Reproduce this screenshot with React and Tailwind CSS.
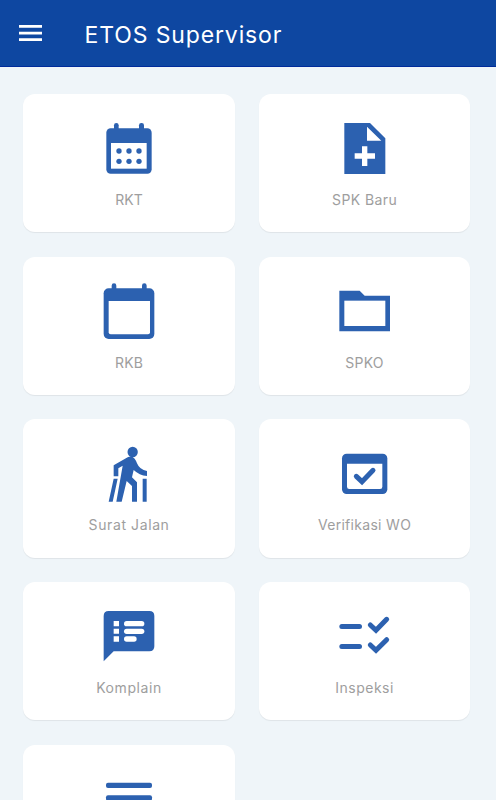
import React from 'react';

function Icon({ dx = -19, dy = -9.3, children }) {
  return (
    <svg className="h-[60px] w-[60px] shrink-0" viewBox="0 0 60 60" fill="#2c61b0">
      <g transform={`translate(${dx} ${dy}) scale(0.33333)`}>{children}</g>
    </svg>
  );
}

const items = [
  {
    label: 'RKT',
    tracking: 'tracking-[0px]',
    icon: (
      <Icon dy={-9}>
        <rect x="102" y="39" width="14" height="30" rx="7" />
        <rect x="177" y="39" width="15" height="30" rx="7" />
        <rect x="79" y="55" width="136" height="136" rx="13" />
        <rect x="93" y="99" width="107" height="77" fill="#fff" />
        {[117, 147, 177].map((x) => (
          <React.Fragment key={x}>
            <circle cx={x} cy="123" r="8" />
            <circle cx={x} cy="154" r="8" />
          </React.Fragment>
        ))}
      </Icon>
    ),
  },
  {
    label: 'SPK Baru',
    tracking: 'tracking-[0.4px]',
    icon: (
      <Icon dx={-20} dy={-9}>
        <path d="M88 39H165L211 85V192H88Z" />
        <path d="M156 50V92H199ZM141 109H157V130H180V146H157V168H141V146H119V130H141Z" fill="#fff" />
      </Icon>
    ),
  },
  {
    label: 'RKB',
    tracking: 'tracking-[0.2px]',
    icon: (
      <Icon dy={-9.7}>
        <rect x="95" y="33" width="14" height="30" rx="7" />
        <rect x="186" y="33" width="14" height="30" rx="7" />
        <rect x="71" y="48" width="152" height="152" rx="15" />
        <path d="M86 86H210V180Q210 186 204 186H92Q86 186 86 180Z" fill="#fff" />
      </Icon>
    ),
  },
  {
    label: 'SPKO',
    tracking: 'tracking-[0.2px]',
    icon: (
      <Icon dx={-20} dy={-10}>
        <path d="M73 56H134L149 71H225V178H73Z" />
        <rect x="88" y="86" width="123" height="76" fill="#fff" />
      </Icon>
    ),
  },
  {
    label: 'Surat Jalan',
    tracking: 'tracking-[0.6px]',
    icon: (
      <Icon dy={-9}>
        <circle cx="158" cy="51" r="15.5" />
        <path d="M101 124V91L143 67Q155 61 164 71Q168 76 171 85Q179 105 201 108V123Q178 121 161 105L156 127L171 142V200H156V153L140 138L125 200H109L128 92L115 100V124Z" />
        <path d="M101 131H113L98 200H86ZM188 131H200V200H188Z" />
      </Icon>
    ),
  },
  {
    label: 'Verifikasi WO',
    tracking: 'tracking-[0.3px]',
    icon: (
      <Icon dx={-25} dy={-9}>
        <rect x="96" y="56" width="136" height="121" rx="14" />
        <path d="M111 86H217V155Q217 162 210 162H118Q111 162 111 155Z" fill="#fff" />
        <path d="M139 124L156 140L189 106" fill="none" stroke="#2c61b0" strokeWidth="15" strokeLinecap="round" />
      </Icon>
    ),
  },
  {
    label: 'Komplain',
    tracking: 'tracking-[0.6px]',
    icon: (
      <Icon dy={-10}>
        <path d="M86 42H208Q223 42 223 57V148Q223 163 208 163H101L71 193V57Q71 42 86 42Z" />
        <path d="M101 72H117V88H101ZM101 95H117V110H101ZM101 118H117V134H101Z" fill="#fff" />
        <g fill="#fff">
          <rect x="132" y="72" width="61" height="16" rx="8" />
          <rect x="132" y="95" width="61" height="16" rx="8" />
          <rect x="132" y="118" width="38" height="16" rx="8" />
        </g>
      </Icon>
    ),
  },
  {
    label: 'Inspeksi',
    tracking: 'tracking-[0.5px]',
    icon: (
      <Icon dx={-20} dy={-10}>
        <rect x="73" y="81" width="68" height="15" rx="7.5" />
        <rect x="73" y="141" width="68" height="15" rx="7.5" />
        <path d="M166 84L183 100L215 67M166 144L183 160L215 128" fill="none" stroke="#2c61b0" strokeWidth="15" strokeLinecap="round" />
      </Icon>
    ),
  },
  {
    label: '',
    tracking: '',
    icon: (
      <Icon dx={0} dy={0}>
        <rect x="21" y="41" width="138" height="16" rx="6" />
        <rect x="21" y="79" width="138" height="16" rx="6" />
        <rect x="21" y="117" width="138" height="16" rx="6" />
      </Icon>
    ),
  },
];

export default function App() {
  return (
    <div className="flex h-screen w-full flex-col overflow-hidden bg-[#eff5f9] font-[Inter,Roboto,sans-serif]">
      <header className="flex h-[67px] shrink-0 items-center border-b border-[#002b9b] bg-[#0e47a1] pl-[19px] text-white">
        <svg className="h-4 w-[23px] shrink-0" viewBox="0 0 23 16" fill="#fff">
          <path d="M0 0H23V2.7H0ZM0 6.7H23V9.4H0ZM0 13.3H23V16H0Z" />
        </svg>
        <h1 className="ml-[42.5px] pt-[3px] text-[23px] leading-8 tracking-[0.87px] whitespace-nowrap">ETOS Supervisor</h1>
      </header>
      <main className="grid shrink-0 auto-rows-[138.2px] grid-cols-[211.5px_211.5px] gap-x-[24px] gap-y-[24.4px] pt-[27.2px] pl-[23.3px]">
        {items.map((item, i) => (
          <div key={i} className="flex flex-col items-center rounded-[12px] bg-white pt-[24.8px] shadow-[0_1px_1px_rgba(0,0,0,0.07)]">
            {item.icon}
            <span className={`mt-[11px] text-[14px] leading-5 whitespace-nowrap text-[#9e9e9e] ${item.tracking}`}>{item.label}</span>
          </div>
        ))}
      </main>
    </div>
  );
}
